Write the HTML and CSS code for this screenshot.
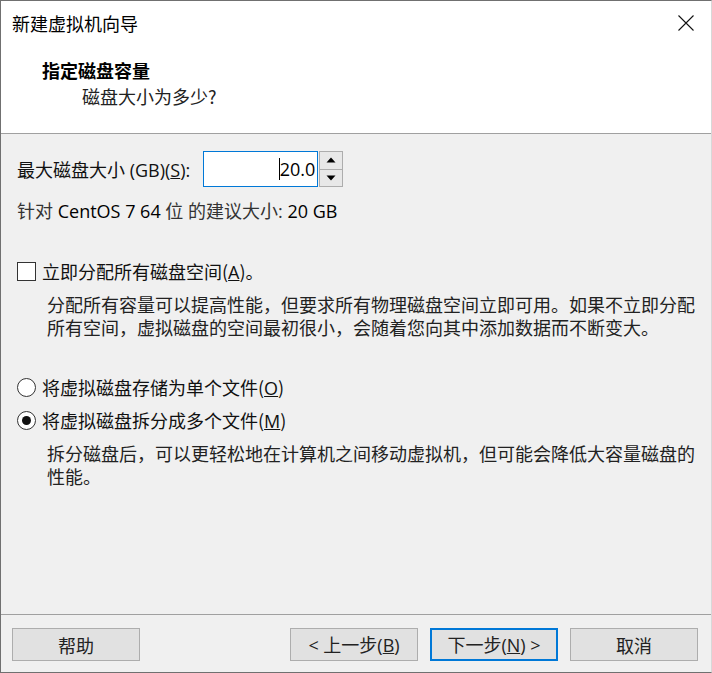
FILE: index.html
```html
<!DOCTYPE html>
<html lang="zh-CN">
<head>
<meta charset="utf-8">
<title>新建虚拟机向导</title>
<link rel="stylesheet" href="styles.css">
</head>
<body>
<div class="win">
  <div class="header">
    <div class="titlebar">
      <span class="title">新建虚拟机向导</span>
      <svg class="close" width="18" height="18" viewBox="0 0 18 18"><path d="M1.5 1.5 L16.5 16.5 M16.5 1.5 L1.5 16.5" stroke="#111" stroke-width="1.1" fill="none"/></svg>
    </div>
    <div class="heading">指定磁盘容量</div>
    <div class="subheading">磁盘大小为多少?</div>
  </div>
  <div class="content">
    <div class="sizerow">
      <span class="lat">最大磁盘大小 (GB)(<u>S</u>):</span>
      <div class="spin">
        <div class="field"><span class="caret"></span><span class="val">20.0</span></div>
        <div class="arrows">
          <div class="arr"><svg width="10" height="6" viewBox="0 0 10 6"><path d="M5 0.5 L9.5 5.5 L0.5 5.5 Z" fill="#000"/></svg></div>
          <div class="arr"><svg width="10" height="6" viewBox="0 0 10 6"><path d="M0.5 0.5 L9.5 0.5 L5 5.5 Z" fill="#000"/></svg></div>
        </div>
      </div>
    </div>
    <div class="rec lat">针对 <span class="dark">CentOS 7 64</span> 位 的建议大小: <span class="dark">20 GB</span></div>
    <div class="opt first"><span class="check"></span><span>立即分配所有磁盘空间(<u class="lat">A</u>)。</span></div>
    <div class="desc"><span class="ln">分配所有容量可以提高性能，但要求所有物理磁盘空间立即可用。如果不立即分配</span><span class="ln">所有空间，虚拟磁盘的空间最初很小，会随着您向其中添加数据而不断变大。</span></div>
    <div class="opt radio1"><span class="radio"></span><span>将虚拟磁盘存储为单个文件(<u class="lat">O</u>)</span></div>
    <div class="opt radio2"><span class="radio on"></span><span>将虚拟磁盘拆分成多个文件(<u class="lat">M</u>)</span></div>
    <div class="desc"><span class="ln">拆分磁盘后，可以更轻松地在计算机之间移动虚拟机，但可能会降低大容量磁盘的</span><span class="ln">性能。</span></div>
  </div>
  <div class="footer">
    <button class="btn">帮助</button>
    <div class="spacer"></div>
    <button class="btn lat">&lt; 上一步(<u>B</u>)</button>
    <button class="btn lat default">下一步(<u>N</u>) &gt;</button>
    <button class="btn">取消</button>
  </div>
</div>
</body>
</html>
```

FILE: styles.css
```css
html, body {
  margin: 0;
  padding: 0;
  background: #f0f0f0;
}
body {
  font-family: "Noto Sans CJK SC", sans-serif;
  font-size: 18px;
  color: #111;
}
.win {
  width: 712px;
  height: 673px;
  box-sizing: border-box;
  border: 1px solid #707070;
  border-right-color: #d8d8d8;
  display: flex;
  flex-direction: column;
  background: #f0f0f0;
}
.header {
  background: #fff;
  height: 133px;
  box-sizing: border-box;
  border-bottom: 1px solid #a0a0a0;
}
.titlebar {
  height: 43px;
  display: flex;
  align-items: center;
  justify-content: space-between;
  padding: 0 16px 0 11px;
}
.title {
  font-size: 18px;
  line-height: 24px;
  color: #000;
}
.close {
  display: block;
}
.heading {
  margin-top: 13px;
  padding-left: 41px;
  font-weight: bold;
  line-height: 26px;
  color: #000;
}
.subheading {
  padding-left: 81px;
  line-height: 26px;
  color: #222;
}
.content {
  flex: 1;
  padding: 0 0 0 16px;
}
.lat {
  font-family: "Open Sans", "Noto Sans CJK SC", sans-serif;
}
.lat u, u.lat {
  font-family: "Open Sans", sans-serif;
}
.dark {
  color: #000;
}
.sizerow {
  margin-top: 17px;
  height: 36px;
  display: flex;
  align-items: center;
  gap: 13px;
}
.spin {
  display: flex;
  height: 36px;
}
.field {
  width: 111px;
  height: 34px;
  border: 1px solid #0078d7;
  background: #fff;
  display: flex;
  align-items: center;
  justify-content: flex-end;
  padding-right: 2px;
  box-sizing: content-box;
}
.field .val {
  font-family: "Open Sans", sans-serif;
  font-size: 18px;
  line-height: 22px;
  color: #000;
}
.caret {
  width: 1px;
  height: 22px;
  background: #000;
}
.arrows {
  display: flex;
  flex-direction: column;
  width: 24px;
  margin-left: 1px;
}
.arr {
  flex: 1;
  border: 1px solid #adadad;
  background: #e8e8e8;
  display: flex;
  align-items: center;
  justify-content: center;
}
.arr + .arr {
  border-top: none;
}
.rec {
  margin-top: 12px;
  line-height: 24px;
  color: #333;
}
.opt {
  display: flex;
  align-items: center;
  gap: 6px;
  line-height: 24px;
  height: 24px;
}
.opt.first {
  margin-top: 36px;
}
.opt.radio1 {
  margin-top: 36px;
}
.opt.radio2 {
  margin-top: 9px;
}
.check {
  width: 17px;
  height: 17px;
  border: 1px solid #333;
  background: #fff;
  flex: none;
}
.radio {
  width: 17px;
  height: 17px;
  border: 1px solid #333;
  border-radius: 50%;
  background: #fff;
  flex: none;
  display: flex;
  align-items: center;
  justify-content: center;
}
.radio.on::after {
  content: "";
  width: 9px;
  height: 9px;
  border-radius: 50%;
  background: #111;
}
.desc {
  margin: 10px 0 0 30px;
  color: #222;
  white-space: nowrap;
}
.desc .ln {
  display: block;
  height: 23px;
  line-height: 23px;
}
.footer {
  height: 58px;
  box-sizing: border-box;
  border-top: 1px solid #a0a0a0;
  display: flex;
  align-items: flex-start;
  padding: 13px 13px 0 11px;
  gap: 12px;
}
.spacer {
  flex: 1;
}
.btn {
  width: 128px;
  height: 33px;
  box-sizing: border-box;
  border: 1px solid #adadad;
  background: #e1e1e1;
  font-family: "Noto Sans CJK SC", sans-serif;
  font-size: 18px;
  color: #222;
  padding: 0;
  line-height: 24px;
}
.btn.lat {
  font-family: "Open Sans", "Noto Sans CJK SC", sans-serif;
}
.btn.default {
  border: 2px solid #0078d7;
}
```
